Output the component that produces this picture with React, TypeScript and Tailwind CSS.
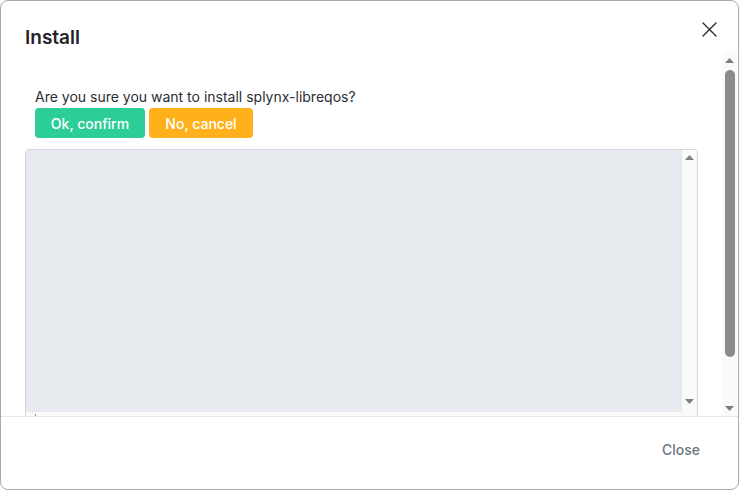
import React from "react";

function TriUp({ color = "#7a7a7a" }: { color?: string }) {
  return (
    <svg width="9" height="5" viewBox="0 0 9 5">
      <polygon points="0,5 9,5 4.5,0" fill={color} />
    </svg>
  );
}
function TriDown({ color = "#7a7a7a" }: { color?: string }) {
  return (
    <svg width="9" height="5" viewBox="0 0 9 5">
      <polygon points="0,0 9,0 4.5,5" fill={color} />
    </svg>
  );
}

export default function App() {
  return (
    <div className="w-[739px] h-[490px] bg-white">
      <div className="relative w-[739px] h-[490px] bg-white border border-[#a9a9a9] rounded-lg flex flex-col overflow-hidden font-['Inter',sans-serif] text-[#212529]">
        {/* header */}
        <div className="h-[51px] px-6 pt-[23px] shrink-0">
          <h2 className="text-[19px] leading-[28px] font-semibold text-[#1f2328]">Install</h2>
        </div>
        <button className="absolute top-[20px] right-[20px] w-[17px] h-[17px] flex items-center justify-center">
          <svg width="15" height="15" viewBox="0 0 15 15">
            <path d="M1 1 L14 14 M14 1 L1 14" stroke="#2b2b2b" strokeWidth="1.4" strokeLinecap="round" />
          </svg>
        </button>

        {/* body */}
        <div className="flex-1 flex min-h-0">
          <div className="flex-1 overflow-hidden px-6 pt-[35px]">
            <p className="ml-[10px] text-[14px] leading-5 text-[#2a2e33]">
              Are you sure you want to install splynx-libreqos?
            </p>
            <div className="ml-[10px] mt-[1px] flex gap-1">
              <button className="h-[30px] w-[110px] rounded bg-[#2ccd97] text-white text-[14px] font-medium">
                Ok, confirm
              </button>
              <button className="h-[30px] w-[104px] rounded bg-[#ffb01a] text-white text-[14px] font-medium">
                No, cancel
              </button>
            </div>
            <div className="mt-[11px] h-[300px] border border-[#cfd5db] rounded flex flex-col overflow-hidden">
              <div className="h-[262px] flex shrink-0">
                <div className="flex-1 bg-[#e6eaee]"></div>
                <div className="w-[15px] bg-[#fafafa] flex flex-col items-center justify-between pt-[5px] pb-[8px]">
                  <TriUp color="#808080" />
                  <TriDown color="#808080" />
                </div>
              </div>
              <div className="h-[15px] bg-[#fafafa] relative">
                <div className="absolute left-[9px] top-[2px] w-[1px] h-[2px] bg-[#999]"></div>
              </div>
            </div>
          </div>
          <div className="w-[15px] bg-[#fafafa] flex flex-col items-center pt-[6px] pb-[5px] mr-[1px]">
            <TriUp color="#7d7d7d" />
            <div className="mt-[7px] w-[10px] h-[287px] rounded-full bg-[#8a8a8a]"></div>
            <div className="flex-1"></div>
            <TriDown color="#7d7d7d" />
          </div>
        </div>

        {/* footer */}
        <div className="h-[73px] shrink-0 border-t border-[#e3e6ea] flex justify-end pt-[23px] pr-[38px]">
          <button className="h-5 text-[14px] leading-5 font-medium text-[#6c7682]">Close</button>
        </div>
      </div>
    </div>
  );
}
